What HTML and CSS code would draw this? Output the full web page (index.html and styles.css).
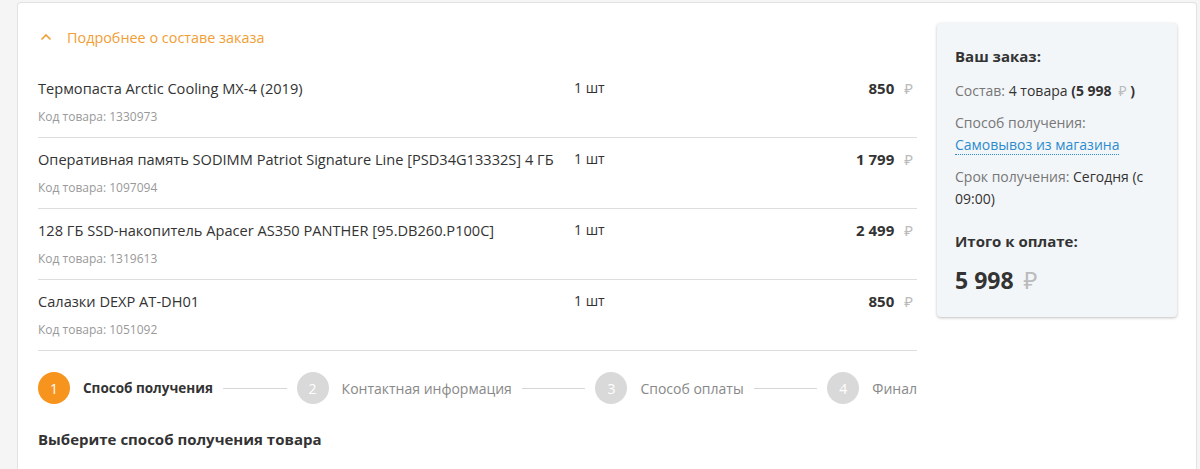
FILE: index.html
```html
<!DOCTYPE html>
<html lang="ru">
<head>
    <meta charset="UTF-8">
    <meta name="viewport" content="width=device-width, initial-scale=1.0">
    <title>Оформление заказа</title>
    <link rel="stylesheet" href="styles.css">
</head>
<body>
    <div class="card">
        <div class="order-main">
            <div class="toggle">
                <svg class="chevron" width="12" height="8" viewBox="0 0 12 8"><path d="M1.5 6.5 L6 2 L10.5 6.5" fill="none" stroke="#f19e35" stroke-width="1.6"/></svg>
                <span>Подробнее о составе заказа</span>
            </div>

            <div class="items">
                <div class="item">
                    <div class="item-info">
                        <div class="item-name">Термопаста Arctic Cooling MX-4 (2019)</div>
                        <div class="item-code">Код товара: 1330973</div>
                    </div>
                    <div class="item-qty">1 шт</div>
                    <div class="item-price">850<span class="rub">₽</span></div>
                </div>
                <div class="item">
                    <div class="item-info">
                        <div class="item-name">Оперативная память SODIMM Patriot Signature Line [PSD34G13332S] 4 ГБ</div>
                        <div class="item-code">Код товара: 1097094</div>
                    </div>
                    <div class="item-qty">1 шт</div>
                    <div class="item-price">1 799<span class="rub">₽</span></div>
                </div>
                <div class="item">
                    <div class="item-info">
                        <div class="item-name">128 ГБ SSD-накопитель Apacer AS350 PANTHER [95.DB260.P100C]</div>
                        <div class="item-code">Код товара: 1319613</div>
                    </div>
                    <div class="item-qty">1 шт</div>
                    <div class="item-price">2 499<span class="rub">₽</span></div>
                </div>
                <div class="item">
                    <div class="item-info">
                        <div class="item-name">Салазки DEXP AT-DH01</div>
                        <div class="item-code">Код товара: 1051092</div>
                    </div>
                    <div class="item-qty">1 шт</div>
                    <div class="item-price">850<span class="rub">₽</span></div>
                </div>
            </div>

            <div class="steps">
                <div class="step active"><span class="step-num">1</span><span class="step-title">Способ получения</span></div>
                <div class="step-line"></div>
                <div class="step"><span class="step-num">2</span><span class="step-title">Контактная информация</span></div>
                <div class="step-line"></div>
                <div class="step"><span class="step-num">3</span><span class="step-title">Способ оплаты</span></div>
                <div class="step-line"></div>
                <div class="step"><span class="step-num">4</span><span class="step-title">Финал</span></div>
            </div>

            <h2 class="section-title">Выберите способ получения товара</h2>
        </div>

        <div class="summary">
            <div class="summary-title">Ваш заказ:</div>
            <div class="summary-row"><span class="label">Состав:</span> 4 товара <b>(5 998<span class="rub">₽</span> )</b></div>
            <div class="summary-row">
                <div class="label">Способ получения:</div>
                <a class="summary-link" href="#">Самовывоз из магазина</a>
            </div>
            <div class="summary-row"><span class="label">Срок получения:</span> Сегодня (с 09:00)</div>
            <div class="summary-total-title">Итого к оплате:</div>
            <div class="summary-total">5 998<span class="rub">₽</span></div>
        </div>
    </div>
</body>
</html>
```

FILE: styles.css
```css
* {
    margin: 0;
    padding: 0;
    box-sizing: border-box;
}

body {
    font-family: 'Open Sans', 'Noto Sans', sans-serif;
    background: #f5f5f5;
    color: #333;
    padding: 2px 3px 0 17px;
    height: 100vh;
    overflow: hidden;
}

.card {
    display: flex;
    align-items: flex-start;
    gap: 20px;
    background: #fff;
    border: 1px solid #e2e2e2;
    border-bottom: none;
    border-radius: 4px 4px 0 0;
    padding: 20px 19px 0 20px;
    height: 100%;
}

.order-main {
    flex: 1;
}

.toggle {
    display: flex;
    align-items: center;
    height: 28px;
    margin-bottom: 16px;
    color: #f19e35;
    font-size: 14.4px;
    cursor: pointer;
}

.chevron {
    margin: 0 15px 0 2px;
}

.item {
    display: flex;
    align-items: flex-start;
    height: 71px;
    padding-top: 10px;
    border-bottom: 1px solid #ddd;
}

.item-info {
    width: 536px;
}

.item-name {
    font-size: 14.6px;
    line-height: 22px;
    white-space: nowrap;
}

.item-code {
    margin-top: 9px;
    font-size: 12px;
    line-height: 18px;
    color: #999;
}

.item-qty {
    font-size: 14px;
    line-height: 22px;
}

.item-price {
    flex: 1;
    text-align: right;
    padding-right: 4px;
    font-size: 15px;
    line-height: 22px;
    font-weight: bold;
}

.rub {
    color: #bbb;
    font-weight: normal;
    margin-left: 10px;
}

.steps {
    display: flex;
    align-items: center;
    height: 32px;
    margin-top: 21px;
}

.step {
    display: flex;
    align-items: center;
    gap: 13px;
}

.step-num {
    width: 32px;
    height: 32px;
    border-radius: 50%;
    background: #d9d9d9;
    color: #fff;
    font-size: 14px;
    display: flex;
    align-items: center;
    justify-content: center;
}

.step-title {
    font-size: 14px;
    color: #888;
}

.step.active .step-num {
    background: #f7941d;
}

.step.active .step-title {
    color: #333;
    font-size: 13.5px;
    font-weight: bold;
}

.step-line {
    flex: 1;
    height: 1px;
    background: #d5d5d5;
    margin: 0 10px;
}

.section-title {
    margin-top: 23px;
    font-size: 15px;
    line-height: 24px;
    font-weight: bold;
}

.summary {
    width: 240px;
    background: #f3f6f9;
    border-radius: 4px;
    box-shadow: 0 1px 3px rgba(0, 0, 0, 0.25);
    padding: 21px 18px 23px;
    font-size: 14px;
    color: #333;
}

.summary-title {
    font-size: 15px;
    font-weight: bold;
    line-height: 24px;
    margin-bottom: 12px;
}

.summary-row {
    line-height: 22px;
    margin-bottom: 10px;
}

.summary-row .label {
    color: #777;
}

.summary-row .rub {
    margin-left: 7px;
}

.summary-link {
    color: #2b8ccd;
    text-decoration: none;
    border-bottom: 1px dotted #2b8ccd;
}

.summary-total-title {
    margin-top: 19px;
    font-size: 15px;
    font-weight: bold;
    line-height: 24px;
}

.summary-total {
    margin-top: 13px;
    font-size: 23px;
    font-weight: bold;
    line-height: 28px;
}

.summary-total .rub {
    font-size: 24px;
}
```
